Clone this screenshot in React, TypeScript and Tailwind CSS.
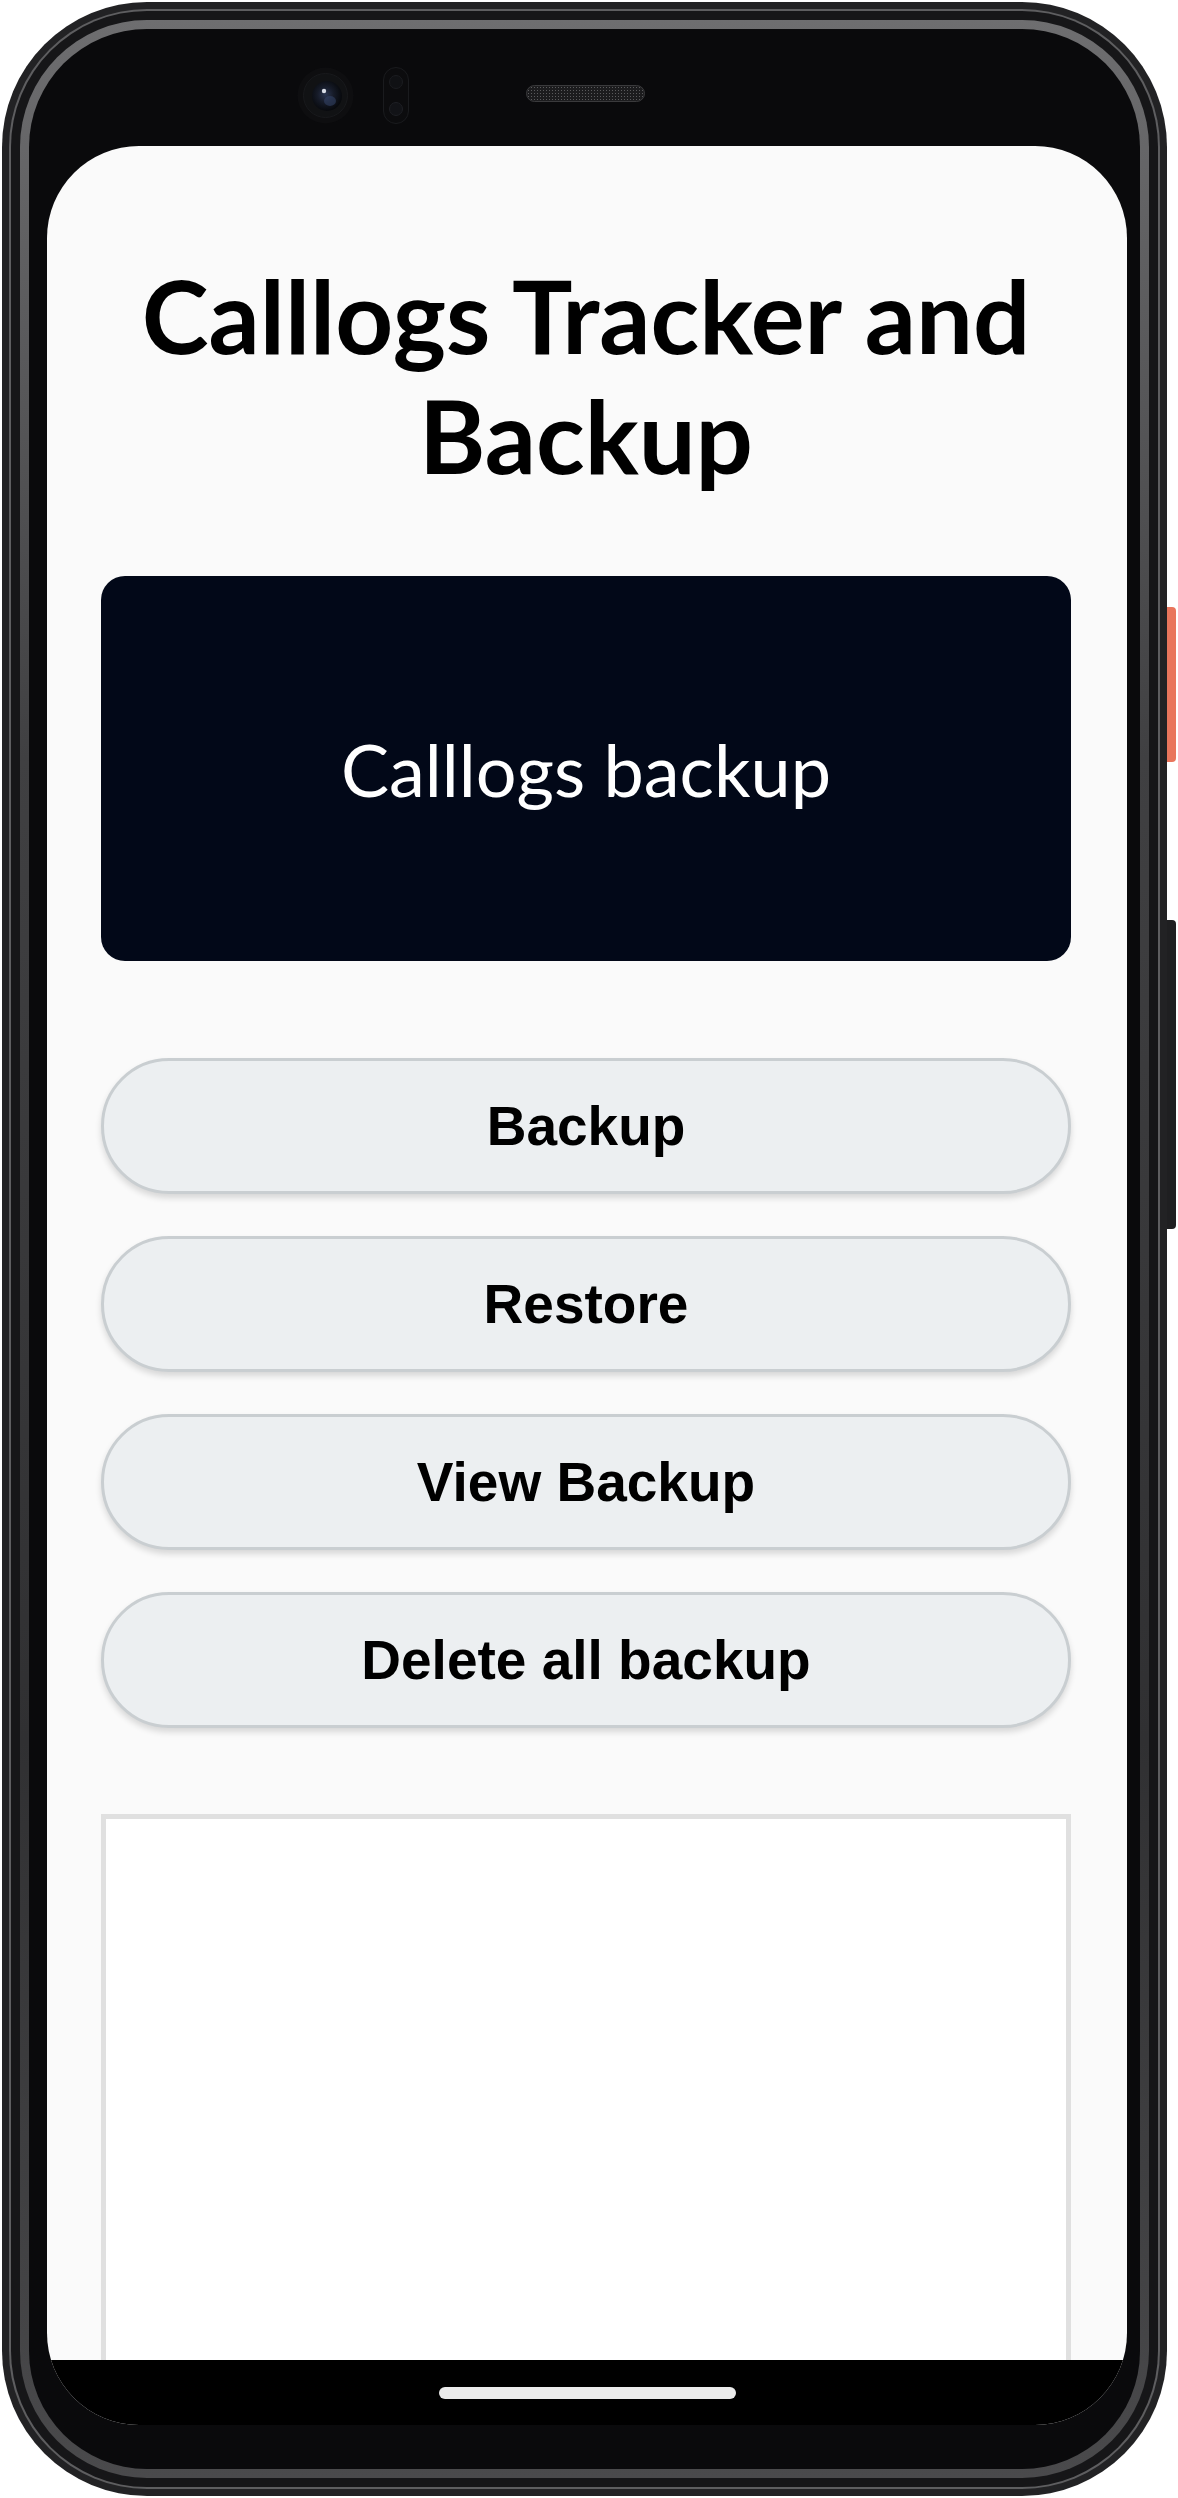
import React from "react";

function Camera() {
  return (
    <svg width="57" height="57" viewBox="0 0 57 57">
      <defs>
        <radialGradient id="lens" cx="45%" cy="45%" r="60%">
          <stop offset="0%" stopColor="#2a3550" />
          <stop offset="45%" stopColor="#161b28" />
          <stop offset="100%" stopColor="#050608" />
        </radialGradient>
      </defs>
      <circle cx="28.5" cy="28.5" r="28" fill="#0e0e10" />
      <circle cx="28.5" cy="28.5" r="22" fill="#111214" stroke="#18191c" strokeWidth="1" />
      <circle cx="30" cy="29" r="15" fill="url(#lens)" />
      <ellipse cx="33" cy="34" rx="6" ry="5" fill="#35466a" opacity="0.55" />
      <circle cx="27" cy="24" r="2.2" fill="#d9dde6" />
    </svg>
  );
}

function Sensor() {
  return (
    <div className="w-[26px] h-[57px] rounded-full border border-[#1a1b1e] bg-[#0c0c0e] flex flex-col items-center justify-between py-[7px]">
      <div className="w-[14px] h-[14px] rounded-full bg-[#101114] border border-[#1b1c20]" />
      <div className="w-[14px] h-[14px] rounded-full bg-[#121317] border border-[#1e1f24]" />
    </div>
  );
}

function Speaker() {
  return (
    <div className="w-[119px] h-[17px] rounded-full border border-[#3a3a3c] bg-[#1c1c1e] bg-[radial-gradient(#5a5a5c_0.8px,transparent_1px)] [background-size:3px_3px]" />
  );
}

const buttons = ["Backup", "Restore", "View Backup", "Delete all backup"];

export default function App() {
  return (
    <div className="w-[1178px] h-[2498px] bg-white relative overflow-hidden">
      {/* side buttons */}
      <div className="absolute left-[1164px] top-[607px] w-[12px] h-[155px] rounded-r-[4px] bg-[#e9755c]" />
      <div className="absolute left-[1164px] top-[920px] w-[12px] h-[309px] rounded-r-[4px] bg-[#1f1f21]" />

      <div className="absolute left-[2px] top-[2px] w-[1165px] h-[2494px] rounded-[145px] bg-[#222224] p-[7px]">
        <div className="w-full h-full rounded-[138px] bg-[#5e5e60] p-[2px]">
          <div className="w-full h-full rounded-[136px] bg-[#161618] p-[9px]">
            <div className="w-full h-full rounded-[127px] bg-[linear-gradient(180deg,#6e6e70,#404042_30%,#303032_70%,#4a4a4c)] p-[9px]">
              <div className="w-full h-full rounded-[118px] bg-[#0a0a0c] flex flex-col">
                {/* top bezel */}
                <div className="h-[117px] flex items-start pt-[38px] pl-[268px] shrink-0">
                  <Camera />
                  <div className="ml-[29px]">
                    <Sensor />
                  </div>
                  <div className="ml-[117px] mt-[18px]">
                    <Speaker />
                  </div>
                </div>

                {/* screen */}
                <div className="ml-[18px] w-[1080px] h-[2279px] rounded-[92px] overflow-hidden bg-[#fafafa] flex flex-col shrink-0">
                  <div className="flex-1 min-h-0 overflow-hidden flex flex-col pl-[54px] pr-[56px]">
                    <h1 className="shrink-0 mt-[109px] text-center text-black font-bold text-[101px] leading-[120px] font-['Lato',_'Noto_Sans',_sans-serif]">
                      Calllogs Tracker and
                      <br />
                      Backup
                    </h1>

                    <div className="shrink-0 mt-[81px] h-[385px] rounded-[24px] bg-[#020818] flex items-center justify-center">
                      <span className="text-white text-[72px] leading-none font-normal font-['Lato',_'Noto_Sans',_sans-serif]">
                        Calllogs backup
                      </span>
                    </div>

                    <div className="shrink-0 mt-[97px] flex flex-col gap-[42px]">
                      {buttons.map((b) => (
                        <div
                          key={b}
                          className="shrink-0 h-[136px] rounded-full bg-[#eceff1] border-[3px] border-[#c9ced1] shadow-[0_4px_6px_rgba(0,0,0,0.14)] flex items-center justify-center"
                        >
                          <span className="text-black font-bold text-[55px] leading-none font-['Liberation_Sans',_Arial,_sans-serif]">
                            {b}
                          </span>
                        </div>
                      ))}
                    </div>

                    <div className="mt-[86px] h-[800px] shrink-0 bg-white border-[5px] border-[#e0e0e0]" />
                  </div>

                  {/* nav bar */}
                  <div className="h-[65px] bg-black shrink-0 flex justify-center pt-[27px]">
                    <div className="w-[297px] h-[12px] rounded-full bg-[#ebebeb]" />
                  </div>
                </div>
              </div>
            </div>
          </div>
        </div>
      </div>
    </div>
  );
}
